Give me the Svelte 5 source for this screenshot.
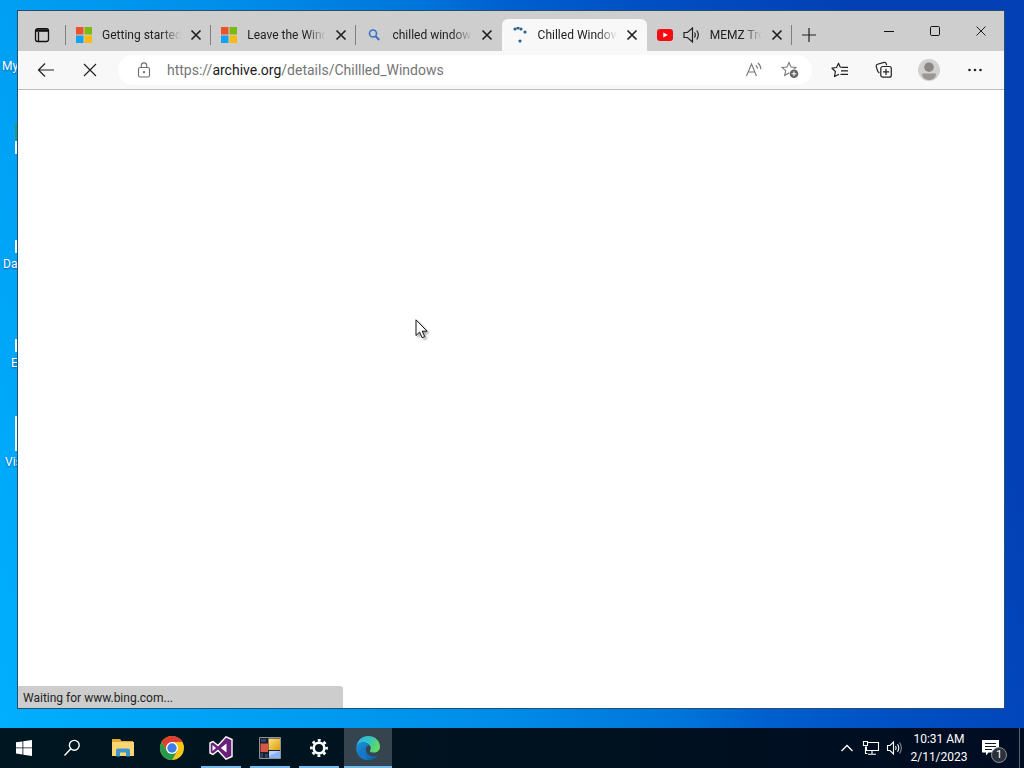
<script lang="ts">
  type Icon = "microsoft" | "search" | "loading" | "youtube";
  type Tab = { title: string; icon: Icon; active?: boolean; audible?: boolean };
  type Shortcut = { label: string; x: number; y: number; icon?: "small" | "tall" | "green" };

  let tabs: Tab[] = $state([
    { title: "Getting started", icon: "microsoft" },
    { title: "Leave the Windows", icon: "microsoft" },
    { title: "chilled windows", icon: "search" },
    { title: "Chilled Windows", icon: "loading", active: true },
    { title: "MEMZ Trojan", icon: "youtube", audible: true },
  ]);

  const shortcuts: Shortcut[] = [
    { label: "My", x: 2, y: 18 },
    { label: "", x: 15, y: 117, icon: "green" },
    { label: "Da", x: 3, y: 216, icon: "small" },
    { label: "E", x: 11, y: 315, icon: "small" },
    { label: "Vis", x: 5, y: 414, icon: "tall" },
  ];

  const spinner = [
    [3, 2], [6, 1], [9, 2], [13, 5], [8, 14],
  ];

  let status = "Waiting for www.bing.com...";
</script>

{#snippet cross(size: number, width: number)}
  <svg width={size} height={size} viewBox="0 0 12 12" fill="none" stroke="currentColor" stroke-width={width}>
    <path d="M1.5 1.5l9 9M10.5 1.5l-9 9" />
  </svg>
{/snippet}

{#snippet favicon(icon: Icon)}
  {#if icon === "microsoft"}
    <svg width="16" height="16" viewBox="0 0 16 16">
      <path fill="#f0512a" d="M0 0h7.5v7.5H0z" />
      <path fill="#7cba10" d="M8.5 0H16v7.5H8.5z" />
      <path fill="#14a3ee" d="M0 8.5h7.5V16H0z" />
      <path fill="#f9bb12" d="M8.5 8.5H16V16H8.5z" />
    </svg>
  {:else if icon === "search"}
    <svg width="16" height="16" viewBox="0 0 16 16" fill="none" stroke="#3a72c4">
      <circle cx="7" cy="6.5" r="3.5" stroke-width="1.6" />
      <path d="M9.6 9.2l3.6 3.8" stroke-width="2" />
    </svg>
  {:else if icon === "loading"}
    <svg width="16" height="16" viewBox="0 0 16 16" fill="#27628f">
      {#each spinner as [cx, cy]}
        <circle {cx} {cy} r="1.6" />
      {/each}
    </svg>
  {:else}
    <svg width="16" height="16" viewBox="0 0 16 16">
      <rect y="2" width="16" height="12" rx="3" fill="#f50b12" />
      <path fill="#fff" d="M6.3 5.4L10.8 8l-4.5 2.6z" />
    </svg>
  {/if}
{/snippet}

<div class="screen">
  <main class="desktop">
    {#each shortcuts as s}
      <div class="shortcut" style="left: {s.x}px; top: {s.y}px">
        {#if s.icon}
          <span class="picture {s.icon}" style="left: {15 - s.x}px"></span>
        {/if}
        <span class="name">{s.label}</span>
      </div>
    {/each}

    <section class="window" aria-label="Browser">
      <header class="tabstrip">
        <button class="tab-actions" aria-label="Tab actions">
          <svg width="16" height="16" viewBox="0 0 16 16" fill="none" stroke="#111" stroke-width="1.3">
            <rect x="1.5" y="1.7" width="13" height="12.8" rx="2.2" />
            <path d="M1.5 3.5h13" stroke-width="2.6" />
            <path d="M4.5 5v9.5" />
          </svg>
        </button>
        <div class="tabs">
          {#each tabs as tab}
            <div class="tab" class:active={tab.active}>
              <button class="tab-title">
                {@render favicon(tab.icon)}
                {#if tab.audible}
                  <svg width="17" height="16" viewBox="0 0 17 16" fill="none" stroke="#222" stroke-width="1.2">
                    <path d="M1 5.5h3.4L9.5 1v14L4.4 10.5H1z" />
                    <path d="M11.5 5.5q1.6 2.500 0 5M13.800 3.500q3 4.500 0 9" />
                  </svg>
                {/if}
                <span class="text">{tab.title}</span>
              </button>
              <button class="tab-close" aria-label="Close tab">{@render cross(12, 1.7)}</button>
            </div>
          {/each}
        </div>
        <button class="new-tab" aria-label="New tab">
          <svg width="14" height="14" viewBox="0 0 14 14" stroke="#222" stroke-width="1.2">
            <path d="M7 0v14M0 7h14" />
          </svg>
        </button>
        <div class="controls">
          <button aria-label="Minimize">
            <svg width="12" height="12" viewBox="0 0 12 12" stroke="#111"><path d="M1 6.5h10" /></svg>
          </button>
          <button aria-label="Maximize">
            <svg width="12" height="12" viewBox="0 0 12 12" fill="none" stroke="#111">
              <rect x="1.5" y="1.5" width="9" height="9" rx="1.2" />
            </svg>
          </button>
          <button aria-label="Close">{@render cross(12, 1)}</button>
        </div>
      </header>

      <div class="toolbar">
        <button aria-label="Back">
          <svg width="18" height="16" viewBox="0 0 18 16" fill="none" stroke="#222" stroke-width="1.2">
            <path d="M17 8H1.5M8 1.5L1.5 8 8 14.5" />
          </svg>
        </button>
        <button aria-label="Stop">{@render cross(16, 0.9)}</button>
        <div class="address">
          <button aria-label="View site information">
            <svg width="14" height="16" viewBox="0 0 14 16" fill="none" stroke="#6d6d6d" stroke-width="1.1">
              <rect x="1.5" y="5.5" width="11" height="9.5" rx="1.8" />
              <path d="M4.3 5.5V3.6a2.7 2.7 0 0 1 5.4 0v1.9" />
              <circle cx="7" cy="10.2" r=".6" fill="#6d6d6d" />
            </svg>
          </button>
          <a class="url" href="https://archive.org/details/Chillled_Windows">https://<b>archive.org</b>/details/Chillled_Windows</a>
          <button aria-label="Read aloud">
            <svg width="18" height="16" viewBox="0 0 18 16" fill="none" stroke="#777" stroke-width="1.1">
              <path d="M1.5 14L6.5 2l5 12M3.2 10h6.6" />
              <path d="M10.8 3.2q1.6 1.3 1.6 3.6M12.8 1q3 2.3 3 6.3" />
            </svg>
          </button>
          <button class="star" aria-label="Add to favorites">
            <svg width="18" height="18" viewBox="0 0 18 18">
              <path d="M8 1.5l2 4.5 4.9.5-3.6 3.2.9 4.6L8 12l-4.3 2.5 1-4.8L1 6.5 6 6z" fill="none" stroke="#777" stroke-width="1.1" />
              <circle cx="13" cy="12.8" r="5" fill="#fff" />
              <circle cx="13" cy="12.8" r="4.3" fill="#666" />
              <path d="M10.7 12.8h4.6M13 10.5v4.6" stroke="#fff" stroke-width="1.1" />
            </svg>
          </button>
        </div>
        <button aria-label="Favorites">
          <svg width="18" height="16" viewBox="0 0 18 16" fill="none" stroke="#222" stroke-width="1.2">
            <path d="M10.5 5.5L9.2 5 7.5 1.2 5.5 5.5 1 6.2l3.4 3.3-.9 5L8 12.2" stroke-linejoin="round" />
            <path d="M10.5 5.3H17M10 8.8h7M9.5 12.3H17" />
          </svg>
        </button>
        <button aria-label="Collections">
          <svg width="18" height="18" viewBox="0 0 18 18" fill="none" stroke="#222" stroke-width="1.2">
            <path d="M4.3 12.2L2.6 10 1.2 5.3Q.9 3.7 2.5 3.2L9 1.3q1.4-.3 2 1l.7 2" />
            <rect x="5.8" y="5.5" width="10.5" height="10.7" rx="2" />
            <path d="M11 7.8v6.2M8 10.9h6.2" />
          </svg>
        </button>
        <button class="wide" aria-label="Profile">
          <svg width="22" height="22" viewBox="0 0 22 22">
            <circle cx="11" cy="11" r="11" fill="#d2d0ce" />
            <circle cx="11" cy="8.2" r="4.8" fill="#8a8785" />
            <path d="M4 14.5h14c.2 3.8-3 6.5-7 6.5s-7.2-2.7-7-6.5z" fill="#9a9795" />
          </svg>
        </button>
        <button class="wide" aria-label="Settings and more">
          <svg width="14" height="4" viewBox="0 0 14 4" fill="#222">
            <circle cx="1.5" cy="2" r="1.3" /><circle cx="7" cy="2" r="1.3" /><circle cx="12.5" cy="2" r="1.3" />
          </svg>
        </button>
      </div>

      <div class="content">
        <div class="status" role="status">{status}</div>
      </div>
    </section>

    <svg class="cursor" width="16" height="22" viewBox="0 0 16 22">
      <path d="M1 .8v15.7l3.6-3.4 2.5 5.6 2.6-1.2-2.5-5.3h4.9z" fill="#fff" stroke="#111" stroke-width="1" />
    </svg>
  </main>

  <footer class="taskbar">
    <button aria-label="Start">
      <svg width="16" height="16" viewBox="0 0 16 16" fill="#fff">
        <path d="M0 2.3L6.5 1.4v6.1H0zM7.3 1.3L16 0v7.5H7.3zM0 8.3h6.5v6.2L0 13.6zM7.3 8.3H16V16l-8.7-1.3z" />
      </svg>
    </button>
    <button aria-label="Search">
      <svg width="18" height="18" viewBox="0 0 18 18" fill="none" stroke="#fff" stroke-width="1.4">
        <circle cx="11.3" cy="6.3" r="4.9" />
        <path d="M7.8 9.8L1.500 16.500" />
      </svg>
    </button>
    <div class="apps">
      <button aria-label="File Explorer">
        <svg width="22" height="20" viewBox="0 0 22 20">
          <path d="M0 1h8l1.5 2H21v15H0z" fill="#e5a92e" />
          <path d="M0 4h22v14H0z" fill="#fad672" />
          <path d="M4 18.5v-6q0-2 2-2h10q2 0 2 2v6h-4v-4H8v4z" fill="#3d97cf" />
        </svg>
      </button>
      <button aria-label="Chrome">
        <svg width="24" height="24" viewBox="0 0 24 24">
          <circle cx="12" cy="12" r="12" fill="#f8c51b" />
          <path d="M1.6 6A12 12 0 0 1 22.4 6H12L6.8 15z" fill="#dd4032" />
          <path d="M1.6 6A12 12 0 0 0 12 24l5.2-9H6.8z" fill="#269a4b" />
          <circle cx="12" cy="12" r="6" fill="#fff" />
          <circle cx="12" cy="12" r="4.7" fill="#3f7fe5" />
        </svg>
      </button>
      <button class="running" aria-label="Visual Studio">
        <svg width="24" height="24" viewBox="0 0 24 24">
          <path d="M1 7l3-1.500L9 9.500 17 .8l6 2.700v17L17 23.200 9 14.500l-5 4L1 17z" fill="#68217a" stroke="#fff" stroke-width="1.4" />
          <path d="M3.500 9v6L7 12zM17.500 7.500v9L11.800 12z" fill="#fff" />
        </svg>
      </button>
      <button class="running" aria-label="Resource editor">
        <svg width="22" height="22" viewBox="0 0 22 22">
          <defs>
            <linearGradient id="gold" x1="0" x2="1" y1="0" y2="1">
              <stop offset="0" stop-color="#fbe38b" />
              <stop offset="1" stop-color="#dd9c00" />
            </linearGradient>
          </defs>
          <path d="M.5.5h21v21H.5z" fill="#17202c" stroke="#8c9299" />
          <path d="M9.500 1.500H21V13H9.500z" fill="url(#gold)" />
          <path d="M1.500 6.500H9V15H1.500z" fill="#d95647" />
          <path d="M10 14h11v7H10z" fill="#8cb2f2" />
          <path d="M10 14h11l-11 5z" fill="#bcd0fa" />
          <path d="M1.500 16H4v5H1.500zM6 17h3v4H6zM2 2h5v3H2z" fill="#30435e" />
        </svg>
      </button>
      <button class="running" aria-label="Settings">
        <svg width="20" height="20" viewBox="0 0 20 20" fill="none" stroke="#fff">
          <circle cx="10" cy="10" r="5.3" stroke-width="2.6" />
          <circle cx="10" cy="10" r="7.6" stroke-width="2.6" stroke-dasharray="2.9 3.069" stroke-dashoffset="1.45" />
        </svg>
      </button>
      <button class="running current" aria-label="Edge">
        <svg width="24" height="24" viewBox="0 0 24 24">
          <defs>
            <linearGradient id="edge-top" x1="0" x2="1" y1=".2" y2=".6">
              <stop offset="0" stop-color="#2bb7e6" />
              <stop offset=".5" stop-color="#36c5bd" />
              <stop offset="1" stop-color="#6bdc55" />
            </linearGradient>
            <linearGradient id="edge-low" x1="0" x2="1" y1="0" y2="1">
              <stop offset="0" stop-color="#1a94dc" />
              <stop offset="1" stop-color="#0c59a4" />
            </linearGradient>
          </defs>
          <path d="M.4 11C1 4.5 6 0 12.2 0 19 0 24 5 24 10.5c0 4-3 6.1-6 6.1-3.2 0-4.6-1.3-4-2.2 1-1.2 1.2-3.9-1.200-5.800C9 5.800 3 6 .4 11z" fill="url(#edge-top)" />
          <path d="M.2 12C.8 7.500 4.500 5.500 8 6c3.500.5 5.200 2.500 5 3.200C9.500 9.800 8.800 14 11 17.200c2.300 3.400 6.900 4.100 11 1.800-2 3.200-5.800 5-10 5C5.500 24-.4 18.700.2 12z" fill="url(#edge-low)" />
          <path d="M9 10.500c-2.500 4.500-.8 9.700 3.300 13.500C5.800 24 1.800 19.500 4 14.500c1-2.300 3-3.700 5-4z" fill="#1878c8" />
        </svg>
      </button>
    </div>
    <div class="tray">
      <button class="small-icon" aria-label="Show hidden icons">
        <svg width="14" height="10" viewBox="0 0 14 10" fill="none" stroke="#fff" stroke-width="1.3"><path d="M1.500 8L7 2.500 12.500 8" /></svg>
      </button>
      <button class="small-icon" aria-label="Network">
        <svg width="18" height="16" viewBox="0 0 18 16" fill="none" stroke="#fff" stroke-width="1.1">
          <path d="M5.500 2.500h11v8H4.500v-4M10 10.500V14M6 14.200h8M3.500 6.500v7h2" />
          <path d="M1.500 1.500h4v4h-4z" />
        </svg>
      </button>
      <button class="small-icon" aria-label="Volume">
        <svg width="18" height="16" viewBox="0 0 18 16" fill="none" stroke="#fff" stroke-width="1.1">
          <path d="M1.500 5.500H4L7.500 2v12L4 10.500H1.500z" />
          <path d="M9.500 6q1.400 2 0 4M11.500 4.300q2.600 3.700 0 7.400" />
          <path d="M13.500 2.500q3.800 5.500 0 11" opacity=".5" />
        </svg>
      </button>
      <button class="clock">
        <span>10:31 AM</span>
        <span>2/11/2023</span>
      </button>
      <button class="notifications" aria-label="Notifications">
        <svg width="18" height="18" viewBox="0 0 18 18">
          <path d="M0 1h17v12.500H6.500L4 16.500v-3H0z" fill="#fff" />
          <path d="M3 4.500h11M3 7.500h11M3 10.500h7" stroke="#0a1626" />
        </svg>
        <span class="badge">1</span>
      </button>
      <button class="show-desktop" aria-label="Show desktop"></button>
    </div>
  </footer>
</div>

<style>
  :global(body) {
    margin: 0;
  }

  .screen {
    display: flex;
    flex-direction: column;
    min-height: 100vh;
    font-family: Roboto, "Open Sans", sans-serif;
    font-size: 12px;
    color: #222;
    background: linear-gradient(70deg, #00b0ff 0%, #009ff4 22%, #008ce8 40%, #0074da 54%, #0060cf 60%, #0050c4 70%, #0340b5 86%);
  }

  button {
    display: flex;
    align-items: center;
    justify-content: center;
    padding: 0;
    border: 0;
    background: none;
    color: inherit;
    font: inherit;
  }

  svg {
    flex: none;
  }

  .desktop {
    position: relative;
    display: flex;
    flex: 1;
    padding: 10px 19px 19px 17px;
    overflow: hidden;
  }

  .shortcut {
    position: absolute;
    width: 74px;
    height: 60px;
    color: #fff;
  }

  .name {
    position: absolute;
    top: 40px;
    line-height: 16px;
    text-shadow: 0 1px 2px #0058a0;
  }

  .picture {
    position: absolute;
    top: 24px;
    width: 24px;
    height: 13px;
    background: #e8f6ff;
  }

  .picture.tall {
    top: 2px;
    height: 35px;
  }

  .picture.green {
    top: 6px;
    border-top: 18px solid #1d9a8c;
  }

  .window {
    position: relative;
    display: flex;
    flex: 1;
    flex-direction: column;
    min-width: 0;
    border: 1px solid #24506e;
    background: #fff;
  }

  .tabstrip {
    display: flex;
    height: 40px;
    background: #cecece;
  }

  .tab-actions {
    width: 48px;
    padding-top: 8px;
  }

  .tabs {
    display: flex;
    flex: 0 1 726px;
    min-width: 0;
    padding-top: 8px;
  }

  .tab {
    position: relative;
    display: flex;
    flex: 1;
    align-items: center;
    min-width: 0;
    padding: 0 9px 0 10px;
  }

  .tab::before {
    content: "";
    position: absolute;
    left: -1px;
    width: 1px;
    height: 20px;
    background: #808080;
  }

  .tab:last-child::after {
    content: "";
    position: absolute;
    right: 0;
    width: 1px;
    height: 20px;
    background: #808080;
  }

  .tab.active {
    border-radius: 6px 6px 0 0;
    background: #f8f8f8;
  }

  .tab.active::before,
  .tab.active + .tab::before {
    display: none;
  }

  .tab-title {
    flex: 1;
    gap: 10px;
    min-width: 0;
  }

  .tab-title .text {
    flex: 1;
    overflow: hidden;
    line-height: 20px;
    text-align: left;
    white-space: nowrap;
    mask-image: linear-gradient(to right, #000 calc(100% - 20px), transparent);
  }

  .tab-close {
    width: 12px;
    margin-left: 9px;
  }

  .new-tab {
    width: 34px;
    padding-top: 8px;
  }

  .controls {
    display: flex;
    margin-left: auto;
  }

  .controls button {
    width: 46px;
  }

  .toolbar {
    display: flex;
    align-items: center;
    height: 38px;
    padding: 0 6px;
    border-bottom: 1px solid #bcbcbc;
    background: #f8f8f8;
  }

  .toolbar > button {
    width: 44px;
    height: 32px;
  }

  .toolbar > .wide {
    width: 46px;
  }

  .address {
    display: flex;
    flex: 1;
    align-items: center;
    height: 30px;
    margin: 0 6px;
    padding: 0 13px 0 19px;
    border-radius: 15px;
    background: #fff;
  }

  .url {
    flex: 1;
    margin-left: 16px;
    color: #757575;
    font-size: 14px;
    line-height: 20px;
    text-decoration: none;
    white-space: nowrap;
  }

  .url b {
    color: #1b1b1b;
    font-weight: 400;
  }

  .star {
    margin-left: 18px;
  }

  .content {
    position: relative;
    flex: 1;
  }

  .status {
    position: absolute;
    bottom: 0;
    left: 0;
    box-sizing: border-box;
    width: 33%;
    padding: 2px 5px 0;
    border-radius: 0 3px 0 0;
    background: #cdcdcd;
    line-height: 20px;
  }

  .cursor {
    position: absolute;
    top: 319px;
    left: 415px;
    filter: drop-shadow(2px 2px 1px #0005);
  }

  .taskbar {
    display: flex;
    height: 40px;
    background: linear-gradient(to right, #001620, #00121f 50%, #000c22);
    color: #fff;
  }

  .taskbar > button,
  .apps button {
    width: 48px;
  }

  .apps {
    display: flex;
    gap: 1px;
    margin-left: 3px;
  }

  .running {
    position: relative;
  }

  .running::after {
    content: "";
    position: absolute;
    right: 4px;
    bottom: 0;
    left: 4px;
    height: 2px;
    background: #76b9ed;
  }

  .current {
    background: #35444f;
  }

  .current::after {
    right: 0;
    left: 0;
  }

  .tray {
    display: flex;
    margin-left: auto;
  }

  .small-icon {
    width: 24px;
  }

  .clock {
    flex-direction: column;
    width: 64px;
    line-height: 18px;
  }

  .notifications {
    position: relative;
    width: 48px;
    padding-right: 8px;
  }

  .badge {
    position: absolute;
    right: 12px;
    bottom: 5px;
    width: 14px;
    border: 1px solid #8a8f96;
    border-radius: 50%;
    background: #2a313b;
    font-size: 11px;
    line-height: 14px;
  }

  .show-desktop {
    width: 5px;
    border-left: 1px solid #5a6270;
  }
</style>
